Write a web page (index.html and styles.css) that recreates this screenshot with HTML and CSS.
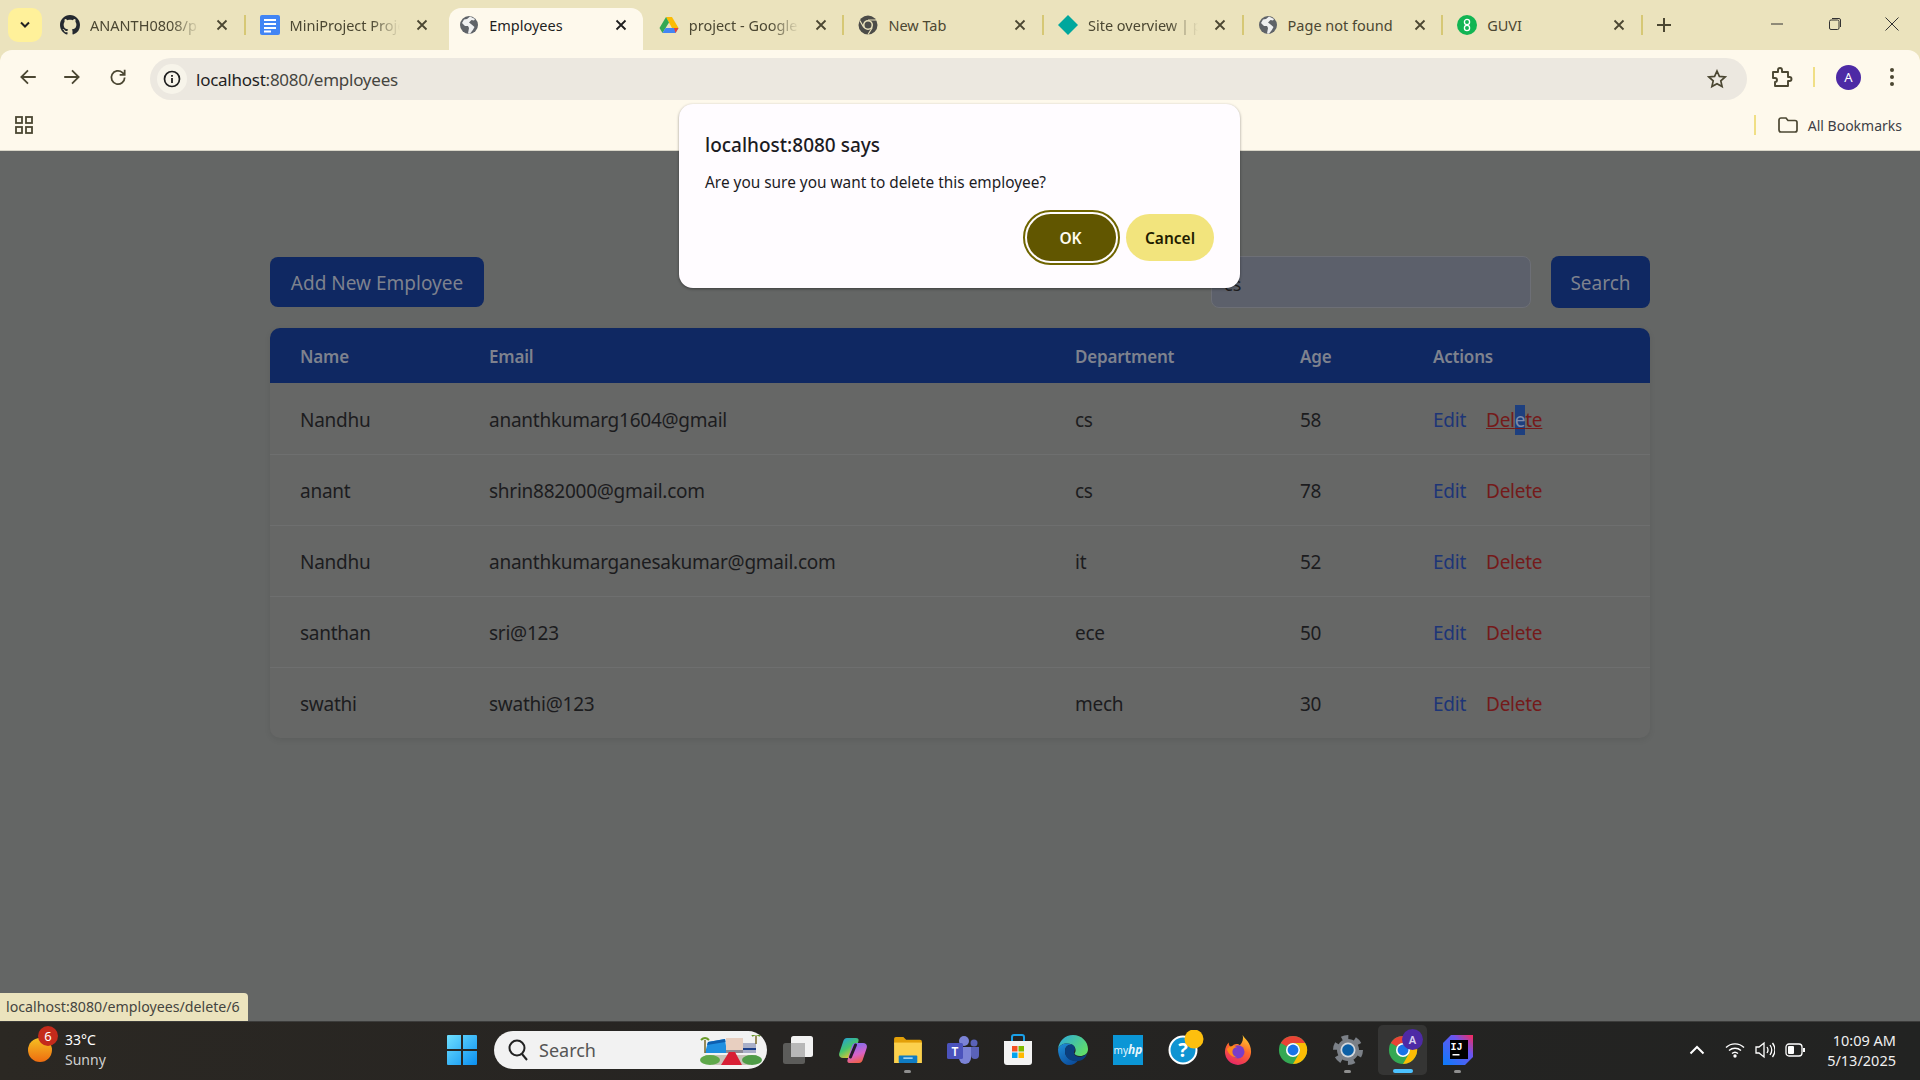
FILE: index.html
```html
<!DOCTYPE html>
<html lang="en">
<head>
    <meta charset="UTF-8">
    <title>Employees</title>
    <link rel="stylesheet" href="styles.css">
</head>
<body>
    <svg class="defs" width="0" height="0">
        <symbol id="globe" viewBox="0 0 20 20">
            <circle cx="10" cy="10" r="9" fill="#5f6368"/>
            <path d="M11 1.500 8 4 5 4.500 3 8l3 3h3l1 2-1 5.500 2 .3 3-4 1.500-2.800L12 9 10 7.500 12.500 5 15 5.500 16 4z" fill="#fff" opacity=".9"/>
        </symbol>
        <symbol id="close" viewBox="0 0 12 12">
            <path d="M1.500 1.500l9 9m0-9l-9 9" stroke="currentColor" stroke-width="1.800" fill="none"/>
        </symbol>
        <symbol id="chrome-color" viewBox="0 0 32 32">
            <circle cx="16" cy="16" r="15" fill="#34a853"/>
            <path d="M16 1a15 15 0 0 1 13 7.500H16a7.500 7.500 0 0 0-6.500 3.750L3 8.500A15 15 0 0 1 16 1z" fill="#ea4335"/>
            <path d="M29 8.500A15 15 0 0 1 16 31l6.500-11.250A7.500 7.500 0 0 0 16 8.500z" fill="#fbbc04"/>
            <circle cx="16" cy="16" r="7.500" fill="#fff"/>
            <circle cx="16" cy="16" r="5.800" fill="#1a73e8"/>
        </symbol>
    </svg>

    <!-- browser chrome -->
    <div class="tabstrip">
        <button class="tab-menu">
            <svg width="12" height="8" viewBox="0 0 12 8"><path d="M2 1.500l4 4 4-4" stroke="#222" stroke-width="2" fill="none"/></svg>
        </button>
        <div class="tab">
            <svg class="favicon" viewBox="0 0 16 16"><path fill="#24292f" d="M8 0C3.580 0 0 3.580 0 8c0 3.540 2.290 6.530 5.470 7.590.4.07.55-.17.55-.38 0-.19-.01-.82-.01-1.490-2.010.37-2.530-.49-2.690-.94-.09-.23-.48-.94-.82-1.130-.28-.15-.68-.52-.01-.53.63-.01 1.080.58 1.230.82.72 1.210 1.870.87 2.330.66.07-.52.28-.87.51-1.070-1.780-.2-3.640-.89-3.640-3.950 0-.87.31-1.590.82-2.150-.08-.2-.36-1.020.08-2.120 0 0 .67-.21 2.200.82.64-.18 1.320-.27 2-.27s1.360.09 2 .27c1.530-1.040 2.200-.82 2.200-.82.44 1.100.16 1.920.08 2.120.51.56.82 1.270.82 2.150 0 3.070-1.870 3.750-3.650 3.950.29.25.54.73.54 1.480 0 1.070-.01 1.930-.01 2.200 0 .21.15.46.55.38A8.013 8.013 0 0 0 16 8c0-4.420-3.580-8-8-8z"/></svg>
            <span class="tab-title fade">ANANTH0808/p</span>
            <svg class="tab-close"><use href="#close"/></svg>
        </div>
        <div class="tab no-sep">
            <svg class="favicon" viewBox="0 0 20 20"><rect width="20" height="20" rx="2" fill="#4285f4"/><path d="M4 5h12M4 9h12M4 13h12M4 16.500h7" stroke="#fff" stroke-width="2"/></svg>
            <span class="tab-title fade">MiniProject Proje</span>
            <svg class="tab-close"><use href="#close"/></svg>
        </div>
        <div class="tab tab-active no-sep">
            <svg class="favicon"><use href="#globe"/></svg>
            <span class="tab-title">Employees</span>
            <svg class="tab-close"><use href="#close"/></svg>
        </div>
        <div class="tab">
            <svg class="favicon" viewBox="0 0 20 20"><path d="M7 2h6l6.500 11H13z" fill="#fbbc04"/><path d="M7 2 .5 13 3.500 18 10 7.500z" fill="#34a853"/><path d="M3.500 18h13l3-5H6.500z" fill="#4285f4"/><path d="M16.500 18l3-5H15z" fill="#ea4335"/></svg>
            <span class="tab-title fade">project - Google</span>
            <svg class="tab-close"><use href="#close"/></svg>
        </div>
        <div class="tab">
            <svg class="favicon" viewBox="0 0 20 20"><circle cx="10" cy="10" r="9.500" fill="#4c4c48"/><circle cx="10" cy="10" r="5" fill="#ebe3bd"/><circle cx="10" cy="10" r="3.500" fill="#4c4c48"/><path d="M10 5h8.500M5.800 12.500 1.800 5.500M14.300 12.500 10 19.500" stroke="#ebe3bd" stroke-width="1.200"/></svg>
            <span class="tab-title">New Tab</span>
            <svg class="tab-close"><use href="#close"/></svg>
        </div>
        <div class="tab">
            <svg class="favicon" viewBox="0 0 20 20"><path d="M10 0l10 10-10 10L0 10z" fill="#00a79d"/></svg>
            <span class="tab-title fade">Site overview | p</span>
            <svg class="tab-close"><use href="#close"/></svg>
        </div>
        <div class="tab">
            <svg class="favicon"><use href="#globe"/></svg>
            <span class="tab-title">Page not found</span>
            <svg class="tab-close"><use href="#close"/></svg>
        </div>
        <div class="tab">
            <svg class="favicon" viewBox="0 0 20 20"><circle cx="10" cy="10" r="10" fill="#12b553"/><circle cx="10" cy="7" r="2.600" stroke="#fff" stroke-width="1.300" fill="none"/><circle cx="10" cy="13" r="2.600" stroke="#fff" stroke-width="1.300" fill="none"/></svg>
            <span class="tab-title">GUVI</span>
            <svg class="tab-close"><use href="#close"/></svg>
        </div>
        <svg class="new-tab" viewBox="0 0 14 14"><path d="M7 0v14M0 7h14" stroke="#4b4732" stroke-width="2"/></svg>
        <div class="win-controls">
            <svg width="14" height="14" viewBox="0 0 14 14"><path d="M1 7h12" stroke="#333" stroke-width="1"/></svg>
            <svg width="14" height="14" viewBox="0 0 14 14"><rect x="1.500" y="3" width="9.500" height="9.500" rx="1.500" stroke="#333" fill="none"/><path d="M4 1.500h7a1.500 1.500 0 0 1 1.500 1.500v7" stroke="#333" fill="none"/></svg>
            <svg width="14" height="14" viewBox="0 0 14 14"><path d="M.5.5l13 13m0-13l-13 13" stroke="#333" fill="none"/></svg>
        </div>
    </div>

    <div class="toolbar">
        <svg class="tool-icon" viewBox="0 0 18 18"><path d="M16 9H3M9 3 3 9l6 6" stroke="#4b4732" stroke-width="1.600" fill="none"/></svg>
        <svg class="tool-icon" viewBox="0 0 18 18"><path d="M2 9h13M9 3l6 6-6 6" stroke="#4b4732" stroke-width="1.600" fill="none"/></svg>
        <svg class="tool-icon" viewBox="0 0 18 18"><path d="M15 9.500A6 6 0 1 1 13 5l2 2M15 2.500V7h-4.500" stroke="#4b4732" stroke-width="1.600" fill="none"/></svg>
        <div class="omnibox">
            <span class="site-info">
                <svg width="18" height="18" viewBox="0 0 18 18"><circle cx="9" cy="9" r="7.500" stroke="#1f1f1f" stroke-width="1.700" fill="none"/><path d="M9 8v5M9 5v1.700" stroke="#1f1f1f" stroke-width="1.800"/></svg>
            </span>
            <span class="url">localhost<span class="url-dim">:8080/employees</span></span>
            <svg class="star" width="20" height="20" viewBox="0 0 20 20"><path d="M10 2l2.400 5.400 5.800.6-4.400 3.900 1.300 5.700L10 14.700l-5.100 2.900 1.300-5.700L1.800 8l5.800-.6z" stroke="#4b4732" stroke-width="1.700" fill="none"/></svg>
        </div>
        <svg class="ext" width="24" height="24" viewBox="0 0 24 24"><path d="M4 7h5V5a2 2 0 0 1 4 0v2h6v5h1.500a2 2 0 0 1 0 4H19v5H6v-4a2 2 0 0 0 0-4H4z" stroke="#4b4732" stroke-width="1.900" fill="none" stroke-linejoin="round"/></svg>
        <span class="sep"></span>
        <span class="avatar">A</span>
        <svg class="kebab" width="4" height="18" viewBox="0 0 4 18"><circle cx="2" cy="2" r="2" fill="#4b4732"/><circle cx="2" cy="9" r="2" fill="#4b4732"/><circle cx="2" cy="16" r="2" fill="#4b4732"/></svg>
    </div>

    <div class="bookmarks">
        <svg width="18" height="18" viewBox="0 0 18 18"><g stroke="#4b4732" stroke-width="1.800" fill="none"><rect x="1" y="1" width="6" height="6"/><rect x="11" y="1" width="6" height="6"/><rect x="1" y="11" width="6" height="6"/><rect x="11" y="11" width="6" height="6"/></g></svg>
        <span class="sep sep-bm"></span>
        <svg width="20" height="16" viewBox="0 0 20 16"><path d="M1 3a2 2 0 0 1 2-2h5l2 2.500h7a2 2 0 0 1 2 2V13a2 2 0 0 1-2 2H3a2 2 0 0 1-2-2z" stroke="#4b4732" stroke-width="1.700" fill="none"/></svg>
        <span class="bm-label">All Bookmarks</span>
    </div>

    <!-- dimmed page -->
    <main class="page">
        <div class="actions-row">
            <a class="btn">Add New Employee</a>
            <div class="search">
                <input class="search-input" type="text" value="cs">
                <a class="btn btn-search">Search</a>
            </div>
        </div>
        <div class="table-wrap">
            <table>
                <colgroup>
                    <col class="col-name"><col class="col-email"><col class="col-dept"><col class="col-age"><col class="col-actions">
                </colgroup>
                <thead>
                    <tr><th>Name</th><th>Email</th><th>Department</th><th>Age</th><th>Actions</th></tr>
                </thead>
                <tbody>
                    <tr>
                        <td>Nandhu</td><td>ananthkumarg1604@gmail</td><td>cs</td><td>58</td>
                        <td><a class="edit">Edit</a><a class="delete delete-hover">Del<span class="sel">e</span>te</a></td>
                    </tr>
                    <tr>
                        <td>anant</td><td>shrin882000@gmail.com</td><td>cs</td><td>78</td>
                        <td><a class="edit">Edit</a><a class="delete">Delete</a></td>
                    </tr>
                    <tr>
                        <td>Nandhu</td><td>ananthkumarganesakumar@gmail.com</td><td>it</td><td>52</td>
                        <td><a class="edit">Edit</a><a class="delete">Delete</a></td>
                    </tr>
                    <tr>
                        <td>santhan</td><td>sri@123</td><td>ece</td><td>50</td>
                        <td><a class="edit">Edit</a><a class="delete">Delete</a></td>
                    </tr>
                    <tr>
                        <td>swathi</td><td>swathi@123</td><td>mech</td><td>30</td>
                        <td><a class="edit">Edit</a><a class="delete">Delete</a></td>
                    </tr>
                </tbody>
            </table>
        </div>
    </main>

    <div class="status-bubble">localhost:8080/employees/delete/6</div>

    <div class="dialog">
        <h2 class="dialog-title">localhost:8080 says</h2>
        <p class="dialog-text">Are you sure you want to delete this employee?</p>
        <div class="dialog-buttons">
            <button class="dlg-btn dlg-ok">OK</button>
            <button class="dlg-btn dlg-cancel">Cancel</button>
        </div>
    </div>

    <!-- windows taskbar -->
    <footer class="taskbar">
        <div class="weather">
            <span class="sun"><span class="badge">6</span></span>
            <div class="weather-text"><span class="temp">33°C</span><span class="cond">Sunny</span></div>
        </div>
        <svg class="winlogo" width="30" height="30" viewBox="0 0 30 30">
            <defs><linearGradient id="win" x1="0" y1="0" x2="1" y2="1"><stop offset="0" stop-color="#6fe0ff"/><stop offset="1" stop-color="#0a8ff0"/></linearGradient></defs>
            <path d="M0 1a1 1 0 0 1 1-1h13v14H0zM16 0h13a1 1 0 0 1 1 1v13H16zM0 16h14v14H1a1 1 0 0 1-1-1zM16 16h14v13a1 1 0 0 1-1 1H16z" fill="url(#win)"/>
        </svg>
        <div class="task-search">
            <svg width="22" height="24" viewBox="0 0 22 24"><circle cx="10" cy="10" r="7.500" stroke="#222" stroke-width="2" fill="none"/><path d="M15 16l5 6" stroke="#222" stroke-width="2"/></svg>
            <span class="task-search-label">Search</span>
            <svg class="search-art" width="62" height="30" viewBox="0 0 62 30">
                <path d="M5 20h52l-7 10H12z" fill="#c9c4ba"/>
                <path d="M8 7l17-3 2 14H5z" fill="#1f8fe0"/>
                <path d="M8 7l17-3 .5 3L7 10z" fill="#0d5fb0"/>
                <rect x="26" y="3" width="17" height="12" fill="#e8cfc0"/>
                <rect x="26" y="15" width="17" height="3" fill="#8d8a93"/>
                <rect x="43" y="8" width="13" height="10" fill="#a9afc8"/>
                <rect x="43" y="13" width="13" height="2" fill="#1b3f8a"/>
                <path d="M29 17h6l7 13H21z" fill="#d81f35"/>
                <ellipse cx="10" cy="25" rx="10" ry="5" fill="#5fa84a"/>
                <ellipse cx="52" cy="25" rx="10" ry="5" fill="#4f9c48"/>
                <path d="M5 18V5M56 9V1" stroke="#7a6a2a" stroke-width="1.500"/>
                <path d="M1 5q4-4 8 0M52 1q4-3 8 0" stroke="#6a9a2a" stroke-width="2" fill="none"/>
            </svg>
        </div>
        <div class="task-icons">
            <span class="task-item">
                <svg width="30" height="28" viewBox="0 0 30 28"><rect y="7" width="22" height="21" rx="2.500" fill="#5c5c5a"/><rect x="8" width="22" height="21" rx="2.500" fill="#f2f2f2"/><path d="M8 7h14v14H8z" fill="#b8b8b8"/></svg>
            </span>
            <span class="task-item">
                <svg width="28" height="25" viewBox="0 0 28 25">
                    <defs>
                        <linearGradient id="cop1" x1="0" y1="0" x2=".6" y2="1"><stop offset="0" stop-color="#1e9be8"/><stop offset=".55" stop-color="#45c46e"/><stop offset="1" stop-color="#f2c12e"/></linearGradient>
                        <linearGradient id="cop2" x1=".4" y1="0" x2=".7" y2="1"><stop offset="0" stop-color="#7c6ff0"/><stop offset=".55" stop-color="#d862c8"/><stop offset="1" stop-color="#f2603a"/></linearGradient>
                    </defs>
                    <path d="M8 0h9c2 0 3 1 2.500 3L15 17c-.6 2-2 3-4 3H4c-3 0-4.500-2-3.700-5L4 4C4.700 1.500 6 0 8 0z" fill="url(#cop1)"/>
                    <path d="M20 25h-9c-2 0-3-1-2.500-3L13 8c.6-2 2-3 4-3h7c3 0 4.500 2 3.700 5L24 21c-.7 2.500-2 4-4 4z" fill="url(#cop2)"/>
                    <path d="M16.500 7 11.500 19" stroke="#241a2c" stroke-width="3" stroke-linecap="round"/>
                </svg>
            </span>
            <span class="task-item has-dot">
                <svg width="30" height="26" viewBox="0 0 32 28"><path d="M1 2a2 2 0 0 1 2-2h8l3 3h15a2 2 0 0 1 2 2v3H1z" fill="#e3a008"/><path d="M1 6h30v22H1z" fill="#fcd14d"/><rect x="6" y="20" width="20" height="8" rx="1" fill="#0f7cc4"/><rect x="11" y="22" width="10" height="1.500" fill="#bfe3f7"/></svg>
            </span>
            <span class="task-item">
                <svg width="32" height="28" viewBox="0 0 32 28"><circle cx="17" cy="5" r="5" fill="#7b83d6"/><circle cx="27" cy="7" r="3.500" fill="#5a62b8"/><path d="M12 11h12v11a6 6 0 0 1-12 0z" fill="#7b83d6"/><path d="M24 11h8v8a4 4 0 0 1-8 0z" fill="#5a62b8"/><rect y="7" width="16" height="16" rx="1.500" fill="#4b53bc"/><text x="8" y="19.500" class="svg-t" text-anchor="middle">T</text></svg>
            </span>
            <span class="task-item">
                <svg width="30" height="32" viewBox="0 0 30 32"><path d="M9 7V3a2 2 0 0 1 2-2h8a2 2 0 0 1 2 2v4" stroke="#1aa0e8" stroke-width="2" fill="none"/><path d="M1 7h28v21a3 3 0 0 1-3 3H4a3 3 0 0 1-3-3z" fill="#f3f3f3"/><rect x="9" y="12" width="5.500" height="5.500" fill="#f25022"/><rect x="15.500" y="12" width="5.500" height="5.500" fill="#7fba00"/><rect x="9" y="18.500" width="5.500" height="5.500" fill="#00a4ef"/><rect x="15.500" y="18.500" width="5.500" height="5.500" fill="#ffb900"/></svg>
            </span>
            <span class="task-item">
                <svg width="30" height="30" viewBox="0 0 30 30">
                    <defs>
                        <linearGradient id="edge" x1="0" y1="0" x2="1" y2=".6"><stop offset="0" stop-color="#2aa7e0"/><stop offset="1" stop-color="#5fdc6c"/></linearGradient>
                        <linearGradient id="edge2" x1="0" y1="0" x2=".6" y2="1"><stop offset="0" stop-color="#1f8fd8"/><stop offset="1" stop-color="#0c4f9e"/></linearGradient>
                    </defs>
                    <path d="M15 0c9 0 15 7 15 14 0 5-4 7-8 7-3 0-5-1-5.500-2.500 2-2 1.500-7-2.500-9C8 7 2 9 0 14 1 6 7 0 15 0z" fill="url(#edge)"/>
                    <path d="M0 14c2-5 8-7 14-4.500-5 0-7 3-7 7 0 6 6 10 13 9-2 2.500-5 4.500-9 4.500C5 30 0 23 0 14z" fill="url(#edge2)"/>
                    <path d="M7 16.500c0-4 2-7 7-7 2.500 1 3 3 3 5-.5 1-1 2-1 3 0 4 5 5 8 4 2-.5 4-2 5-3-1 4-4 7-9 7.500-7 1-13-3-13-9.500z" fill="#0b3f7e"/>
                </svg>
            </span>
            <span class="task-item">
                <svg width="30" height="30" viewBox="0 0 30 30"><rect width="30" height="30" fill="#0b96d6"/><text x="15" y="18.500" class="svg-hp" text-anchor="middle">my<tspan class="svg-hp-b">hp</tspan></text></svg>
            </span>
            <span class="task-item">
                <svg class="help-icon" width="44" height="40" viewBox="0 0 44 40"><circle cx="22" cy="20" r="13.500" fill="#0f94d2" stroke="#fff" stroke-width="2"/><text x="22" y="27" class="svg-q" text-anchor="middle">?</text><circle cx="33" cy="9" r="9.500" fill="#fdbf0e"/></svg>
            </span>
            <span class="task-item">
                <svg width="28" height="30" viewBox="0 0 30 32"><defs><linearGradient id="fx" x1=".7" y1="0" x2=".3" y2="1"><stop offset="0" stop-color="#ffcb2e"/><stop offset=".45" stop-color="#ff6a2a"/><stop offset="1" stop-color="#e6246a"/></linearGradient></defs><path d="M20 0c2 4 9 8 9 18a14 14 0 0 1-28 0C1 14 3 10 5 8c0 3 1 4 3 5 2-4 7-4 9-2 3-3 4-7 3-11z" fill="url(#fx)"/><circle cx="15" cy="18" r="7" fill="#7a3dc8"/><path d="M3 15c3-4 8-4 11-2-3 0-5 2-5 5 0 3 2 5 5 6-5 0-9-3-11-9z" fill="#ff8a1c"/></svg>
            </span>
            <span class="task-item">
                <svg width="30" height="30"><use href="#chrome-color"/></svg>
            </span>
            <span class="task-item has-dot">
                <svg width="32" height="32" viewBox="0 0 32 32"><circle cx="16" cy="16" r="11" fill="#7b8087"/><circle cx="16" cy="16" r="12.500" fill="none" stroke="#7b8087" stroke-width="5" stroke-dasharray="6.500 6.590"/><circle cx="16" cy="16" r="7.500" fill="#d3d8dd"/><circle cx="16" cy="16" r="5.800" fill="#0b5fa5"/></svg>
            </span>
            <span class="task-item task-active">
                <svg width="30" height="30"><use href="#chrome-color"/></svg>
                <span class="chrome-badge">A</span>
            </span>
            <span class="task-item has-dot">
                <svg width="30" height="30" viewBox="0 0 30 30"><defs><linearGradient id="ij" x1="0" y1="1" x2="1" y2="0"><stop offset="0" stop-color="#087cfa"/><stop offset=".65" stop-color="#6a55f0"/><stop offset="1" stop-color="#fe2857"/></linearGradient></defs><path d="M8 0h22v22l-8 8H0V8z" fill="url(#ij)"/><rect x="7" y="5" width="18" height="19" fill="#000"/><text x="13.500" y="14.500" class="svg-ij" text-anchor="middle">IJ</text><rect x="9.500" y="19" width="7" height="1.500" fill="#fff"/></svg>
            </span>
        </div>
        <div class="tray">
            <svg class="tray-chevron" width="16" height="10" viewBox="0 0 16 10"><path d="M1.500 8.500 8 2l6.500 6.500" stroke="#fff" stroke-width="2" fill="none"/></svg>
            <svg width="20" height="16" viewBox="0 0 20 16"><path d="M1 5.500a13 13 0 0 1 18 0M4 8.500a9 9 0 0 1 12 0M7 11.500a4.500 4.500 0 0 1 6 0" stroke="#fff" stroke-width="1.400" fill="none"/><circle cx="10" cy="14" r="1.700" fill="#fff"/></svg>
            <svg width="20" height="18" viewBox="0 0 20 18"><path d="M1 6h3l5-4v14l-5-4H1z" stroke="#fff" stroke-width="1.300" fill="none"/><path d="M12 6q2 3 0 6M15 4q3.500 5 0 10M17.500 2q5 7 0 14" stroke="#fff" stroke-width="1.300" fill="none"/></svg>
            <svg width="20" height="14" viewBox="0 0 20 14"><rect x="1" y="1" width="16" height="12" rx="3" stroke="#fff" stroke-width="1.300" fill="none"/><rect x="3" y="3" width="6" height="8" rx="1" fill="#fff"/><rect x="18" y="5" width="2" height="4" fill="#fff"/></svg>
            <div class="clock"><span>10:09 AM</span><span>5/13/2025</span></div>
        </div>
    </footer>
</body>
</html>
```

FILE: styles.css
```css
/* page reset */
* {
    margin: 0;
    padding: 0;
    box-sizing: border-box;
}

body {
    position: relative;
    display: flex;
    flex-direction: column;
    height: 100vh;
    overflow: hidden;
    font-family: "Noto Sans", "Open Sans", sans-serif;
    background-color: #ebe3bd;
    color: #1c1c1e;
}

.defs {
    position: absolute;
}

/* tabs */
.tabstrip {
    display: flex;
    align-items: center;
    height: 50px;
    padding-left: 8px;
    background-color: #ebe3bd;
    flex-shrink: 0;
}

.tab-menu {
    display: flex;
    align-items: center;
    justify-content: center;
    width: 34px;
    height: 34px;
    margin-right: 6px;
    border: none;
    border-radius: 10px;
    background-color: #fff19a;
}

.tab {
    position: relative;
    display: flex;
    align-items: center;
    width: 199.600px;
    height: 42px;
    margin-top: 8px;
    padding: 0 19.500px 0 12px;
    font-size: 14.500px;
    color: #4b4732;
}

.tab::after {
    content: "";
    position: absolute;
    right: 2px;
    top: 7px;
    width: 2px;
    height: 20px;
    background-color: #d6c875;
}

.tab.no-sep::after {
    display: none;
}

.tab-active {
    color: #1f1f1f;
    z-index: 1;
}

.tab-active::before {
    content: "";
    position: absolute;
    top: 0;
    bottom: 0;
    left: 2px;
    right: 4px;
    z-index: -1;
    background-color: #fef9ec;
    border-radius: 12px 12px 0 0;
}

.tab .favicon {
    width: 20px;
    height: 20px;
    margin-bottom: 8px;
    flex-shrink: 0;
}

.tab-title {
    flex: 1;
    margin: 0 10px 8px;
    white-space: nowrap;
}

.fade {
    mask-image: linear-gradient(90deg, #000 70%, transparent 95%);
}

.tab-close {
    width: 12px;
    height: 12px;
    margin-bottom: 8px;
    flex-shrink: 0;
}

.new-tab {
    width: 14px;
    height: 14px;
    margin-left: 12px;
}

.win-controls {
    display: flex;
    gap: 43.500px;
    align-items: center;
    margin-left: auto;
    padding-right: 21px;
    margin-top: -2px;
}

/* address bar */
.toolbar {
    display: flex;
    align-items: center;
    height: 54px;
    padding: 0 20px 0 18px;
    background-color: #fef9ec;
    border-radius: 12px 12px 0 0;
    flex-shrink: 0;
}

.tool-icon {
    width: 20px;
    height: 20px;
    margin-right: 24px;
    flex-shrink: 0;
}

.toolbar .tool-icon:nth-child(2) {
    margin-right: 26px;
}

.toolbar .tool-icon:nth-child(3) {
    margin-right: 22px;
}

.omnibox {
    display: flex;
    align-items: center;
    width: 1597px;
    height: 42px;
    margin-top: 4px;
    padding-left: 7px;
    padding-right: 20px;
    border-radius: 21px;
    background-color: #ece8e0;
    flex-shrink: 0;
}

.site-info {
    display: flex;
    align-items: center;
    justify-content: center;
    width: 30px;
    height: 30px;
    border-radius: 50%;
    background-color: #f7f4ea;
}

.url {
    margin-left: 9px;
    font-size: 17px;
    letter-spacing: -0.25px;
    color: #1f1f1f;
}

.url-dim {
    color: #45453f;
}

.star {
    margin-left: auto;
}

.ext {
    margin-left: 22px;
}

.sep {
    width: 2px;
    height: 20px;
    margin: 0 21px 0 20px;
    background-color: #f0df85;
}

.avatar {
    display: flex;
    align-items: center;
    justify-content: center;
    width: 25px;
    height: 25px;
    border-radius: 50%;
    background-color: #4d2aa5;
    color: #fff;
    font-size: 13px;
}

.kebab {
    margin-left: 29px;
}

/* bookmarks row */
.bookmarks {
    display: flex;
    align-items: center;
    height: 47px;
    padding: 0 18px 4px 15px;
    background-color: #fef9ec;
    border-bottom: 1px solid #d9d6c8;
    flex-shrink: 0;
}

.sep-bm {
    margin: 0 22px 0 auto;
}

.bm-label {
    margin-left: 10px;
    font-size: 14px;
    color: #3f3f46;
}

/* employees page, dimmed by the dialog */
.page {
    flex: 1;
    padding: 105px 270px 0;
    background-color: #646665;
}

.actions-row {
    display: flex;
    align-items: center;
    justify-content: space-between;
    margin-bottom: 20px;
}

.btn {
    display: block;
    width: 214px;
    height: 50px;
    line-height: 52px;
    border-radius: 8px;
    text-align: center;
    background-color: #0f2862;
    color: #7e828e;
    font-size: 19px;
}

.search {
    display: flex;
    align-items: center;
    gap: 20px;
}

.search-input {
    width: 320px;
    height: 52px;
    padding: 4px 12px 0;
    border: 1px solid #6d6f76;
    border-radius: 8px;
    background-color: #5c606b;
    color: #1c1c1e;
    font-family: inherit;
    font-size: 18px;
}

.btn-search {
    width: 99px;
    height: 52px;
    line-height: 54px;
}

.table-wrap {
    border-radius: 10px;
    overflow: hidden;
    background-color: #666766;
    box-shadow: 0 2px 6px rgba(0, 0, 0, 0.08);
}

table {
    width: 100%;
    table-layout: fixed;
    border-collapse: collapse;
}

.col-name { width: 189px; }
.col-email { width: 586px; }
.col-dept { width: 225px; }
.col-age { width: 133px; }
.col-actions { width: 247px; }

th {
    height: 55px;
    padding: 2px 30px 0;
    text-align: left;
    font-size: 17px;
    font-weight: 600;
    letter-spacing: -0.2px;
    color: #7e828e;
    background-color: #0f2862;
}

td {
    height: 71px;
    padding: 3px 30px 0;
    font-size: 19px;
    letter-spacing: -0.25px;
    white-space: nowrap;
    border-bottom: 1px solid #6e6f6f;
}

tbody tr:last-child td {
    border-bottom: none;
}

.edit {
    color: #1d3577;
}

.delete {
    margin-left: 20px;
    color: #741a1a;
}

.delete-hover {
    text-decoration: underline;
}

.sel {
    padding: 2px 0;
    background-color: #1d3f7f;
    color: #7e8aa8;
}

/* browser status bubble */
.status-bubble {
    position: absolute;
    left: 0;
    bottom: 59px;
    width: 248px;
    height: 28px;
    padding-left: 6px;
    line-height: 27px;
    font-size: 14.200px;
    white-space: nowrap;
    color: #45453f;
    background-color: #ebe3bd;
    border-radius: 0 4px 0 0;
}

/* js confirm */
.dialog {
    position: absolute;
    left: 679px;
    top: 104px;
    width: 561px;
    height: 184px;
    padding: 26px 26px 0;
    border-radius: 14px;
    background-color: #fffcff;
    box-shadow: 0 1px 3px rgba(0, 0, 0, 0.4);
}

.dialog-title {
    font-size: 19px;
    font-weight: 500;
    line-height: 30px;
    color: #1c1b1f;
}

.dialog-text {
    margin-top: 11px;
    font-size: 15.400px;
    line-height: 24px;
    color: #1c1b1f;
}

.dialog-buttons {
    display: flex;
    justify-content: flex-end;
    gap: 10px;
    margin-top: 19px;
}

.dlg-btn {
    height: 47px;
    width: 88px;
    border: none;
    border-radius: 24px;
    font-family: inherit;
    font-size: 15.500px;
    font-weight: 600;
}

.dlg-ok {
    width: 89px;
    padding-right: 2px;
    background-color: #615600;
    color: #fffcef;
    outline: 2px solid #6f6500;
    outline-offset: 2px;
}

.dlg-cancel {
    background-color: #f2e47d;
    color: #1f1c00;
}

/* taskbar */
.taskbar {
    display: flex;
    align-items: center;
    height: 59px;
    padding: 0 0 2px 28px;
    background: linear-gradient(90deg, #2b2823, #262422 40%, #222322);
    border-top: 1px solid #3c3c3b;
    color: #fff;
    flex-shrink: 0;
}

.weather {
    display: flex;
    align-items: center;
    width: 419px;
}

.sun {
    position: relative;
    width: 24px;
    height: 24px;
    border-radius: 50%;
    background: linear-gradient(#f5c022, #ee6c10);
}

.badge {
    position: absolute;
    left: 10px;
    top: -12px;
    width: 20px;
    height: 20px;
    border-radius: 50%;
    background-color: #c42b1c;
    color: #fff;
    font-size: 13px;
    line-height: 20px;
    text-align: center;
}

.weather-text {
    display: flex;
    flex-direction: column;
    margin-left: 13px;
    font-size: 14px;
    line-height: 20px;
}

.cond {
    color: #d0d0d0;
}

.task-search {
    display: flex;
    align-items: center;
    width: 273px;
    height: 38px;
    margin-left: 17px;
    padding: 0 5px 0 13px;
    border-radius: 19px;
    background-color: #f2f2f2;
}

.task-search-label {
    margin-left: 10px;
    font-size: 18px;
    color: #555;
}

.search-art {
    margin-left: auto;
}

.task-icons {
    display: flex;
    margin-left: 3px;
}

.task-item {
    position: relative;
    display: flex;
    align-items: center;
    justify-content: center;
    width: 55px;
    height: 58px;
}

.task-item svg {
    position: relative;
    flex-shrink: 0;
}

.has-dot::after,
.task-active::after {
    content: "";
    position: absolute;
    left: 24px;
    bottom: 6px;
    width: 7px;
    height: 3px;
    border-radius: 2px;
    background-color: #8f8f8f;
}

.task-active::before {
    content: "";
    position: absolute;
    top: 4px;
    bottom: 4px;
    left: 3px;
    right: 3px;
    border-radius: 5px;
    background-color: #353534;
}

.task-active::after {
    left: 17.500px;
    width: 20px;
    height: 4px;
    background-color: #4cc2ff;
}

.chrome-badge {
    position: absolute;
    right: 7px;
    top: 8px;
    width: 21px;
    height: 21px;
    border-radius: 50%;
    background-color: #4d2aa5;
    color: #d8d0f0;
    font-size: 11px;
    font-weight: 600;
    line-height: 21px;
    text-align: center;
}

.svg-t {
    fill: #fff;
    font-family: "Noto Sans", sans-serif;
    font-size: 12px;
    font-weight: 600;
}

.svg-hp {
    fill: #e6f5fc;
    font-family: "Noto Sans", sans-serif;
    font-size: 10px;
}

.svg-hp-b {
    font-style: italic;
    font-weight: 700;
    font-size: 12px;
}

.svg-q {
    fill: #fff;
    font-family: "Noto Sans", sans-serif;
    font-size: 20px;
    font-weight: 700;
}

.svg-ij {
    fill: #fff;
    font-family: "Liberation Mono", monospace;
    font-size: 10px;
    font-weight: 700;
}

.tray {
    display: flex;
    align-items: center;
    gap: 10px;
    margin-left: auto;
    padding-right: 24px;
}

.tray-chevron {
    margin-right: 10px;
}

.clock {
    display: flex;
    flex-direction: column;
    align-items: flex-end;
    margin-left: 12px;
    font-size: 14.500px;
    line-height: 20px;
    color: #f0f0f0;
}
```
